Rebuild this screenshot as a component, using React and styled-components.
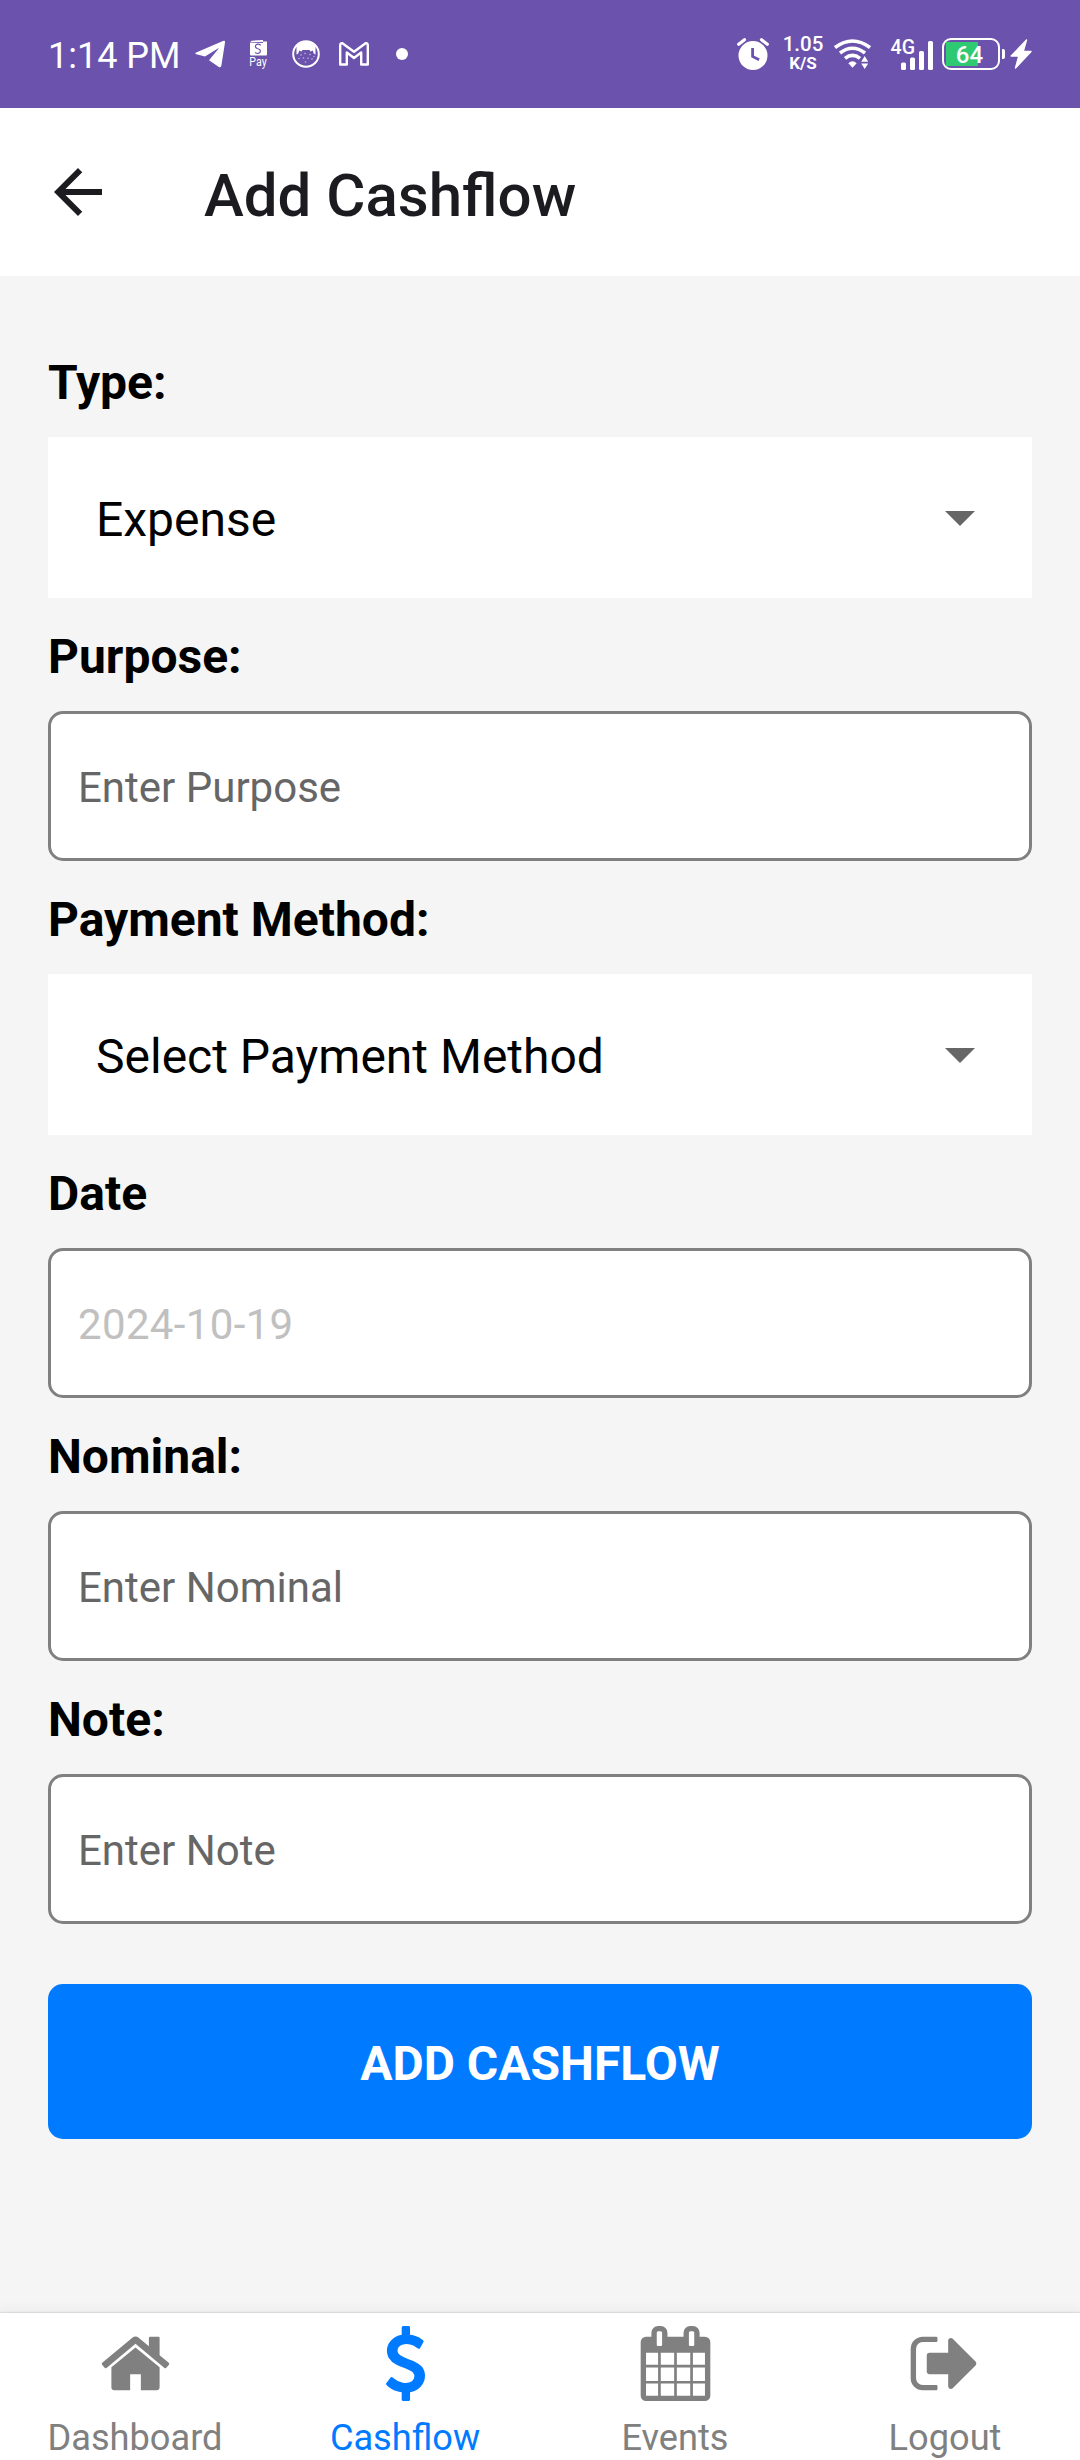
import React from "react";
import styled, { createGlobalStyle } from "styled-components";

const GlobalStyle = createGlobalStyle`
  *, *::before, *::after { box-sizing: border-box; }
  body { margin: 0; background: #f5f5f5; }
`;

const Screen = styled.div`
  display: flex;
  flex-direction: column;
  width: 1080px;
  height: 2460px;
  background: #f5f5f5;
  color: #000;
  font-family: Roboto, "Noto Sans", sans-serif;
  overflow: hidden;
`;

const StatusBar = styled.header`
  display: flex;
  justify-content: space-between;
  height: 108px;
  padding: 0 48px;
  background: #6b52ac;
  color: #fff;
`;

const StatusGroup = styled.div`
  display: flex;
  align-items: center;
  height: 108px;
`;

const Clock = styled.span`
  width: 147px;
  padding-top: 3px;
  font-size: 36px;
  line-height: 42px;
  white-space: nowrap;
`;

const StatusIcon = styled.svg`
  display: block;
  flex: none;
  width: ${(p) => p.$w}px;
  height: ${(p) => p.$h}px;
  margin-left: ${(p) => p.$gap || 0}px;
`;

const Dot = styled.span`
  width: 12px;
  height: 12px;
  margin-left: 27px;
  border-radius: 50%;
  background: #fff;
`;

const Speed = styled.div`
  display: flex;
  flex-direction: column;
  align-items: center;
  width: 38px;
  margin-left: 15px;
  padding-bottom: 2px;
  font-weight: 500;
`;

const SpeedValue = styled.span`
  font-size: 20.5px;
  line-height: 19px;
`;

const SpeedUnit = styled.span`
  font-size: 17px;
  font-weight: 700;
  line-height: 18px;
`;

const Battery = styled.div`
  display: flex;
  align-items: center;
  justify-content: center;
  width: 58px;
  height: 32px;
  margin-left: 9px;
  padding: 1px 3px 0 0;
  border: 2px solid #fff;
  border-radius: 9px;
  background: linear-gradient(#2ec971, #2ec971) 2px 2px / 32px 24px no-repeat;
  font-size: 24px;
  font-weight: 500;
  line-height: 28px;
`;

const BatteryTip = styled.span`
  width: 3px;
  height: 10px;
  margin-left: 2px;
  border-radius: 0 2px 2px 0;
  background: #fff;
`;

const AppBar = styled.div`
  display: flex;
  align-items: center;
  height: 168px;
  padding-left: 42px;
  background: #fff;
  color: #1c1b1f;
`;

const BackIcon = styled.svg`
  display: block;
  width: 72px;
  height: 72px;
  fill: currentColor;
`;

const Title = styled.h1`
  margin: 8px 0 0 90px;
  font-size: 60px;
  font-weight: 500;
  line-height: 72px;
`;

const Form = styled.form`
  display: flex;
  flex: 1;
  flex-direction: column;
  padding: 48px 48px 0;
`;

const Label = styled.label`
  height: 113px;
  padding-top: 31px;
  font-size: 48px;
  font-weight: 700;
  line-height: 56px;
`;

const Picker = styled.div`
  display: flex;
  align-items: center;
  justify-content: space-between;
  height: 161px;
  padding: 4px 57px 0 48px;
  background: #fff;
  font-size: 48px;
  line-height: 56px;
`;

const Caret = styled.svg`
  display: block;
  width: 30px;
  height: 15px;
  margin-top: -3px;
  fill: #666;
`;

const Field = styled.div`
  display: flex;
  align-items: center;
  height: 150px;
  padding: 4px 27px 0;
  border: 3px solid #808080;
  border-radius: 15px;
  background: #fff;
  color: ${(p) => (p.$muted ? "#c0c0c0" : "#666")};
  font-size: 42px;
  letter-spacing: ${(p) => (p.$muted ? "0.35px" : "normal")};
  line-height: 50px;
`;

const Submit = styled.button`
  height: 155px;
  margin-top: 60px;
  padding: 4px 0 0;
  border: 0;
  border-radius: 15px;
  background: #007bff;
  color: #fff;
  font-family: inherit;
  font-size: 48px;
  font-weight: 700;
  line-height: 56px;
`;

const TabBar = styled.nav`
  display: grid;
  grid-template-columns: repeat(4, 1fr);
  height: 147px;
  background: #fff;
  box-shadow: 0 -1px 1px rgba(0, 0, 0, 0.08), 0 -3px 12px rgba(0, 0, 0, 0.05);
`;

const Tab = styled.a`
  display: flex;
  flex-direction: column;
  align-items: center;
  padding-top: 13px;
  color: ${(p) => (p.$active ? "#007bff" : "#808080")};
  font-size: 36.2px;
  line-height: 42px;
`;

const TabIcon = styled.svg`
  display: block;
  width: 75px;
  height: 75px;
  margin-bottom: 16px;
  fill: currentColor;
`;

const icons = {
  home: "M1472 992v480q0 26-19 45t-45 19h-384v-384h-256v384h-384q-26 0-45-19t-19-45v-480q0-1 .5-3t.5-3l575-474 575 474q1 2 1 6zm223-69l-62 74q-8 9-21 11h-3q-13 0-21-7l-692-577-692 577q-12 8-24 7-13-2-21-11l-62-74q-8-10-7-23.5t11-21.5l719-599q32-26 76-26t76 26l244 204v-195q0-14 9-23t23-9h192q14 0 23 9t9 23v408l219 182q10 8 11 21.5t-7 23.5z",
  dollar: "M1362 1185q0 153-99.5 263.5t-258.5 136.5v175q0 14-9 23t-23 9h-135q-13 0-22.5-9.5t-9.5-22.5v-175q-66-9-127.5-31t-101.5-44.5-74-48-46.5-37.5-17.5-18q-17-21-2-41l103-135q7-10 23-12 15-2 24 9l2 2q113 99 243 125 37 8 74 8 81 0 142.5-43t61.5-122q0-28-15-53t-33.5-42-58.5-37.5-66-32-80-32.5q-39-16-61.5-25t-61.5-26.5-62.5-31-56.5-35.5-53.5-42.5-43.5-49-35.5-58-21-66.5-8.5-78q0-138 98-242t255-134v-180q0-13 9.5-22.5t22.5-9.5h135q14 0 23 9t9 23v176q57 6 110.5 23t87 33.5 63.5 37.5 39 29 15 14q17 18 5 38l-81 146q-8 15-23 16-14 3-27-7-3-3-14.5-12t-39-26.5-58.5-32-74.5-26-85.5-11.5q-95 0-155 43t-60 111q0 26 8.5 48t29.5 41.5 39.5 33 56 31 60.5 27 70 27.5q53 20 81 31.5t76 35 75.5 42.5 62 50 53 63.5 31.5 76.5 13 94z",
  calendar: "M192 1664h288v-288h-288v288zm352 0h320v-288h-320v288zm-352-352h288v-320h-288v320zm352 0h320v-320h-320v320zm-352-384h288v-288h-288v288zm736 736h320v-288h-320v288zm-384-736h320v-288h-320v288zm768 736h288v-288h-288v288zm-384-352h320v-320h-320v320zm-352-864v-288q0-13-9.5-22.5t-22.5-9.5h-64q-13 0-22.5 9.5t-9.5 22.5v288q0 13 9.5 22.5t22.5 9.5h64q13 0 22.5-9.5t9.5-22.5zm736 864h288v-320h-288v320zm-384-384h320v-288h-320v288zm384 0h288v-288h-288v288zm32-480v-288q0-13-9.5-22.5t-22.5-9.5h-64q-13 0-22.5 9.5t-9.5 22.5v288q0 13 9.5 22.5t22.5 9.5h64q13 0 22.5-9.5t9.5-22.5zm384-64v1280q0 52-38 90t-90 38h-1408q-52 0-90-38t-38-90v-1280q0-52 38-90t90-38h128v-96q0-66 47-113t113-47h64q66 0 113 47t47 113v96h384v-96q0-66 47-113t113-47h64q66 0 113 47t47 113v96h128q52 0 90 38t38 90z",
  signOut: "M704 1440q0 4 1 20t.5 26.5-3 23.5-10 19.5-20.5 6.5h-320q-119 0-203.5-84.5t-84.5-203.5v-704q0-119 84.5-203.5t203.5-84.5h320q13 0 22.5 9.5t9.5 22.5q0 4 1 20t.5 26.5-3 23.5-10 19.5-20.5 6.5h-320q-66 0-113 47t-47 113v704q0 66 47 113t113 47h312l11.5 1 11.5 3 8 5.5 7 9 2 13.5zm928-544q0 26-19 45l-544 544q-19 19-45 19t-45-19-19-45v-288h-448q-26 0-45-19t-19-45v-384q0-26 19-45t45-19h448v-288q0-26 19-45t45-19 45 19l544 544q19 19 19 45z",
};

const tabs = [
  { label: "Dashboard", icon: "home" },
  { label: "Cashflow", icon: "dollar", active: true },
  { label: "Events", icon: "calendar" },
  { label: "Logout", icon: "signOut" },
];

const fields = [
  { label: "Type:", value: "Expense", picker: true },
  { label: "Purpose:", value: "Enter Purpose" },
  { label: "Payment Method:", value: "Select Payment Method", picker: true },
  { label: "Date", value: "2024-10-19", muted: true },
  { label: "Nominal:", value: "Enter Nominal" },
  { label: "Note:", value: "Enter Note" },
];

function Telegram() {
  return (
    <StatusIcon $w={30} $h={28} viewBox="0 0 30 28" fill="#fff">
      <path d="M1.200 12.600 28 1q2.300-.9 2 1.500L26.400 25.500q-.5 2.800-2.900 1.300L14 20.300l9.500-11.500q.6-1-.6-.4L10 16.500l-8.600-2.200q-2-.6-.2-1.700z" />
    </StatusIcon>
  );
}

function PayWallet() {
  return (
    <StatusIcon $w={18} $h={34} $gap={24} viewBox="0 -2 18 34" fill="#fff">
      <path d="M1 3.500 2.500 1.700 14 1v1.500H18V15.500q0 1-1 1H2q-1 0-1-1V4h13v-1z" />
      <path d="M11.800 6.200Q9 4.300 7 5.900q-1.600 2.400 1.200 3.600 4 1 3 3.700-1.700 2.200-5.200.2" fill="none" stroke="#6b52ac" strokeWidth="1.200" />
      <text x="0.300" y="27" fontSize="12" fontFamily="Roboto, sans-serif" textLength="17.400" lengthAdjust="spacingAndGlyphs">Pay</text>
    </StatusIcon>
  );
}

function CatBadge() {
  return (
    <StatusIcon $w={28} $h={28} $gap={25} viewBox="0 0 28 28">
      <circle cx="14" cy="14" r="12.800" fill="none" stroke="#fff" strokeWidth="2" />
      <path d="M4.500 14.500V6Q9 1.500 14 1.500t9.500 4.500v8.500q-2.500-.5-2.500-4l-2.500 1-1-1.500h-7l-1 1.500-2.500-1q0 3.500-2.500 4z" fill="#fff" />
      <g fill="#fff" opacity=".6">
        <circle cx="9" cy="15" r=".8" /><circle cx="13" cy="13.500" r=".8" /><circle cx="18" cy="14.500" r=".8" />
        <circle cx="22" cy="16.500" r=".7" /><circle cx="7" cy="18.500" r=".8" /><circle cx="11.500" cy="18" r=".8" />
        <circle cx="16" cy="18.300" r=".8" /><circle cx="20" cy="19" r=".8" /><circle cx="13.500" cy="22" r=".8" />
      </g>
    </StatusIcon>
  );
}

function Gmail() {
  return (
    <StatusIcon $w={30} $h={24} $gap={19} viewBox="0 0 30 24">
      <path d="M1.200 3.200Q1.200 1 3.400 1.200L15 9.800 26.600 1.200q2.200-.2 2.200 2V22.500H22.200V10.500L15 16 7.800 10.500V22.500H1.200z" fill="none" stroke="#fff" strokeWidth="2.400" strokeLinejoin="round" />
    </StatusIcon>
  );
}

function Alarm() {
  return (
    <StatusIcon $w={32} $h={32} viewBox="0 0 32 32">
      <circle cx="16" cy="17.500" r="14.500" fill="#fff" />
      <path d="M1.700 6.200 7.500 1.700M30.300 6.200 24.500 1.700" stroke="#fff" strokeWidth="3.200" strokeLinecap="round" />
      <path d="M15.600 10v8.500l6.500 3.200" fill="none" stroke="#6b52ac" strokeWidth="2.800" />
    </StatusIcon>
  );
}

function Wifi() {
  return (
    <StatusIcon $w={37} $h={30} $gap={12} viewBox="0 0 37 30">
      <g fill="none" stroke="#fff" strokeWidth="3.600">
        <path d="M1 8.500Q18.500-4.500 36 8.500" />
        <path d="M6 14Q18.500 4.500 31 14" />
        <path d="M11 19.300Q18.500 13.500 26 19.300" />
      </g>
      <path d="M14.300 24.200Q18.500 20.500 22.700 24.200L18.500 28.700z" fill="#fff" />
      <path d="M27.200 22.700 30.700 17l3.500 5.700zM27.200 24.500h7L30.700 30z" fill="#fff" />
    </StatusIcon>
  );
}

function Signal() {
  return (
    <StatusIcon $w={43} $h={44} $gap={19} viewBox="0 -5 43 44" fill="#fff">
      <text x="0.500" y="17.300" fontSize="21" fontWeight="500" fontFamily="Roboto, sans-serif" textLength="24.500" lengthAdjust="spacingAndGlyphs">4G</text>
      <rect x="11" y="25.500" width="5" height="7.500" rx="1.500" />
      <rect x="20" y="20.500" width="5" height="12.500" rx="1.500" />
      <rect x="29" y="14" width="5" height="19" rx="1.500" />
      <rect x="38" y="4" width="5" height="29" rx="1.500" />
    </StatusIcon>
  );
}

function Bolt() {
  return (
    <StatusIcon $w={22} $h={30} $gap={5} viewBox="0 0 22 30">
      <path d="M16.500 1 1.200 17h7.600L5.500 29 21 12.500h-7.800z" fill="#fff" stroke="#fff" strokeWidth="1.400" strokeLinejoin="round" />
    </StatusIcon>
  );
}

export default function App() {
  return (
    <>
      <GlobalStyle />
      <Screen>
        <StatusBar>
          <StatusGroup>
            <Clock>1:14 PM</Clock>
            <Telegram />
            <PayWallet />
            <CatBadge />
            <Gmail />
            <Dot />
          </StatusGroup>
          <StatusGroup>
            <Alarm />
            <Speed>
              <SpeedValue>1.05</SpeedValue>
              <SpeedUnit>K/S</SpeedUnit>
            </Speed>
            <Wifi />
            <Signal />
            <Battery>64</Battery>
            <BatteryTip />
            <Bolt />
          </StatusGroup>
        </StatusBar>
        <AppBar>
          <BackIcon viewBox="0 0 24 24">
            <path d="M20 11H7.830l5.590-5.590L12 4l-8 8 8 8 1.410-1.410L7.830 13H20z" />
          </BackIcon>
          <Title>Add Cashflow</Title>
        </AppBar>
        <Form>
          {fields.map((f) => (
            <React.Fragment key={f.label}>
              <Label>{f.label}</Label>
              {f.picker ? (
                <Picker>
                  {f.value}
                  <Caret viewBox="0 0 30 15">
                    <path d="M0 0h30L15 15z" />
                  </Caret>
                </Picker>
              ) : (
                <Field $muted={f.muted}>{f.value}</Field>
              )}
            </React.Fragment>
          ))}
          <Submit type="button">ADD CASHFLOW</Submit>
        </Form>
        <TabBar>
          {tabs.map((t) => (
            <Tab key={t.label} $active={t.active}>
              <TabIcon viewBox="0 0 1792 1792">
                <path d={icons[t.icon]} />
              </TabIcon>
              {t.label}
            </Tab>
          ))}
        </TabBar>
      </Screen>
    </>
  );
}
